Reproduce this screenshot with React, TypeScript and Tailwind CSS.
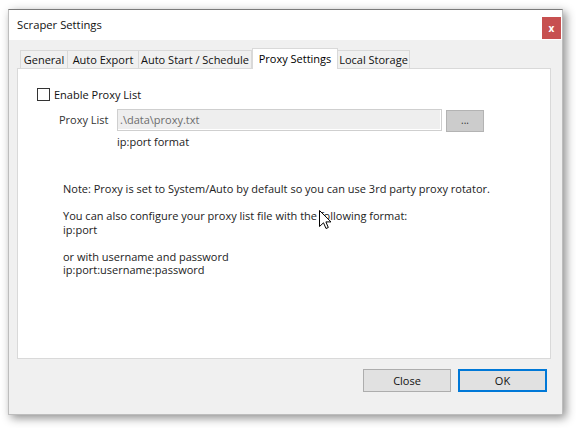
import React, { useState } from "react";

const tabs = ["General", "Auto Export", "Auto Start / Schedule", "Proxy Settings", "Local Storage"];
const tabWidths: Record<string, string> = {
    "General": "w-[48px]",
    "Auto Export": "w-[72px] -ml-px",
    "Auto Start / Schedule": "w-[114px] -ml-px",
    "Proxy Settings": "w-[86px]",
    "Local Storage": "w-[73px] -ml-px",
};

function Cursor() {
    return (
        <svg className="absolute left-[319px] top-[210px] z-20" width="13" height="20" viewBox="0 0 13 20">
            <path d="M0.5 0.5 L0.5 16.5 L4.5 12.8 L7 18.5 L9.3 17.5 L6.9 11.9 L12 11.9 Z" fill="#fff" stroke="#000" strokeWidth="1" strokeLinejoin="round" />
        </svg>
    );
}

export default function App() {
    const [activeTab, setActiveTab] = useState("Proxy Settings");
    const [enabled, setEnabled] = useState(false);

    return (
        <div className="relative w-[576px] h-[428px] overflow-hidden bg-white font-['Open_Sans',sans-serif] text-[11px] text-black">
            <div className="ml-[8px] mt-[9px] w-[555px] h-[406px] flex flex-col bg-[#f0f0f0] border border-[#bdbdbd] border-t-[#7a7a7a] shadow-[3px_3px_9px_rgba(0,0,0,0.45)]">
                {/* title bar */}
                <div className="h-[30px] shrink-0 bg-white flex justify-between">
                    <span className="pl-[8px] pt-[7px] text-[11.25px] leading-[15px] text-[#111]">Scraper Settings</span>
                    <button className="mt-[7px] mr-px w-[19px] h-[22px] bg-[#c75050] text-white text-[10px] font-bold leading-none flex items-center justify-center">
                        x
                    </button>
                </div>

                <div className="flex-1 pl-[8px] pt-[8px]">
                    {/* tab strip */}
                    <div className="ml-[3px] h-[20px] flex items-end">
                        {tabs.map((t) => {
                            const active = t === activeTab;
                            return (
                                <div
                                    key={t}
                                    onClick={() => setActiveTab(t)}
                                    className={
                                        active
                                            ? "relative z-10 -mb-px h-[21px] w-[86px] bg-white border-t border-x border-[#d9d9d9] flex items-center justify-center pb-px leading-[14px] text-black"
                                            : `h-[18px] ${tabWidths[t]} bg-[#f0f0f0] border-t border-x border-[#d9d9d9] flex items-center justify-center leading-[14px] text-[#111]`
                                    }
                                >
                                    {t}
                                </div>
                            );
                        })}
                    </div>

                    {/* tab page */}
                    <div className="w-[534px] h-[291px] bg-white border border-[#d9d9d9] pl-[19px] pt-[19px]">
                        <div className="flex items-center h-[13px]">
                            <div
                                onClick={() => setEnabled(!enabled)}
                                className="w-[13px] h-[13px] border border-[#333] bg-white"
                            />
                            <span className="ml-[4px] leading-[14px] text-[#111]">Enable Proxy List</span>
                        </div>

                        <div className="mt-[8px] flex items-start">
                            <span className="ml-[22px] w-[58px] h-[22px] flex items-center text-[#333] leading-[14px]">Proxy List</span>
                            <div className="w-[325px] h-[22px] border border-[#cfcfcf] bg-[#eeeeee] shadow-[inset_-1px_-1px_0_#ffffff] flex items-center pl-[2px] text-[#6d6d6d] leading-[14px]">
                                .\data\proxy.txt
                            </div>
                            <button className="ml-[4px] mt-px w-[38px] h-[22px] bg-[#cccccc] border border-[#b3b3b3] text-[#333] text-[10px] leading-none flex items-end justify-center pb-[6px]">
                                ...
                            </button>
                        </div>

                        <div className="mt-[3px] ml-[80px] leading-[14px] text-[#222]">ip:port format</div>

                        <div className="mt-[33px] ml-[26px] leading-[13.5px] text-[#222]">
                            <p>Note: Proxy is set to System/Auto by default so you can use 3rd party proxy rotator.</p>
                            <p className="h-[13.5px]" />
                            <p>You can also configure your proxy list file with the following format:</p>
                            <p>ip:port</p>
                            <p className="h-[13.5px]" />
                            <p>or with username and password</p>
                            <p>ip:port:username:password</p>
                        </div>
                    </div>

                    {/* dialog buttons */}
                    <div className="w-[534px] mt-[10px] pr-[4px] flex justify-end gap-[7px]">
                        <button className="w-[88px] h-[23px] bg-[#e1e1e1] border border-[#adadad] text-[#111] leading-[14px]">Close</button>
                        <button className="w-[89px] h-[23px] bg-[#e1e1e1] border-2 border-[#0078d7] text-[#111] leading-[14px]">OK</button>
                    </div>
                </div>
            </div>
            <Cursor />
        </div>
    );
}
